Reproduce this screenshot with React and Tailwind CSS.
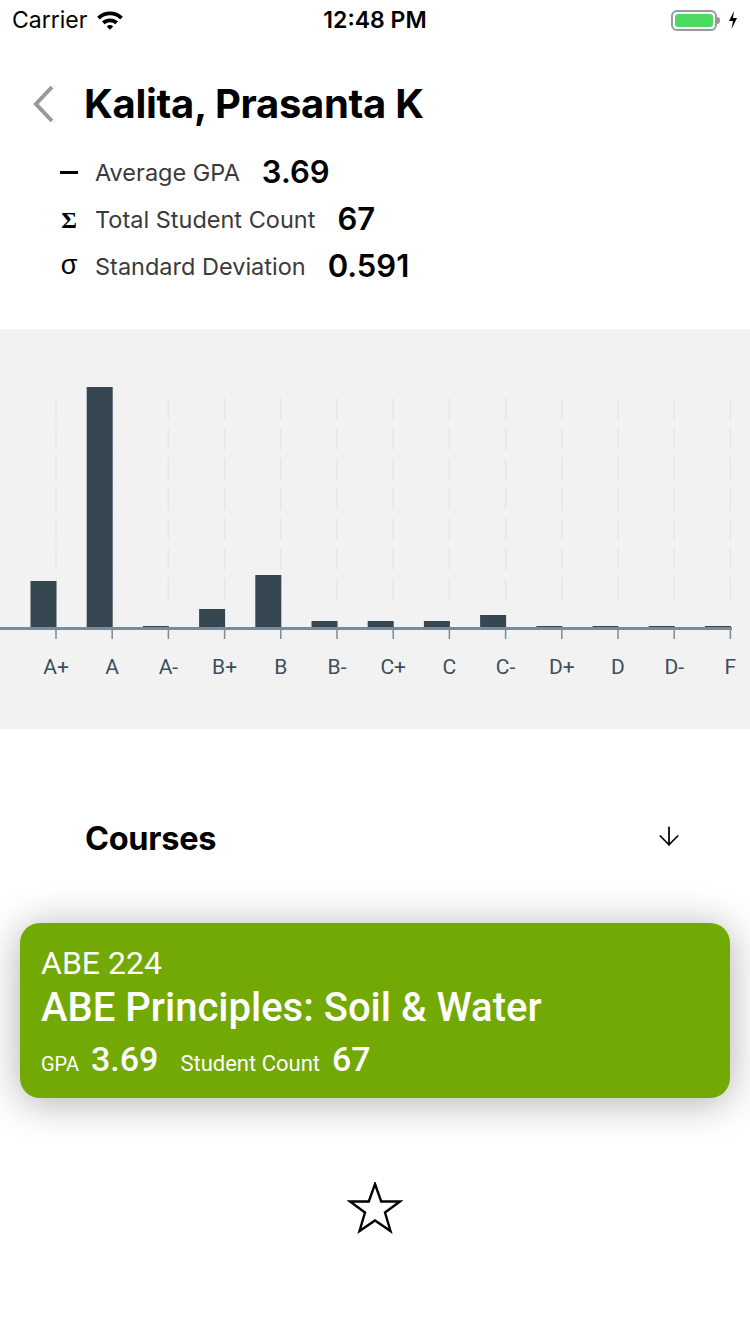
import { ArrowDown } from "lucide-react"

const grades = [
  { g: "A+", h: 48 },
  { g: "A", h: 242 },
  { g: "A-", h: 3 },
  { g: "B+", h: 20 },
  { g: "B", h: 54 },
  { g: "B-", h: 8 },
  { g: "C+", h: 8 },
  { g: "C", h: 8 },
  { g: "C-", h: 14 },
  { g: "D+", h: 3 },
  { g: "D", h: 3 },
  { g: "D-", h: 3 },
  { g: "F", h: 3 },
]

function StatusBar() {
  return (
    <div className="h-10 grid grid-cols-3 items-center px-3 font-['Inter',sans-serif] text-[23px] text-black">
      <div className="flex items-center gap-2">
        <span>Carrier</span>
        <svg width="30" height="22" viewBox="0 0 28 20">
          <path d="M2 7 A17 17 0 0 1 26 7 L23.5 9.5 A13.5 13.5 0 0 0 4.5 9.5 Z" fill="black" />
          <path d="M6.5 11.5 A11 11 0 0 1 21.5 11.5 L19 14 A7.5 7.5 0 0 0 9 14 Z" fill="black" />
          <path d="M11 16 A4.5 4.5 0 0 1 17 16 L14 19 Z" fill="black" />
        </svg>
      </div>
      <div className="text-center font-semibold">12:48 PM</div>
      <div className="flex items-center justify-end gap-1">
        <div className="w-[46px] h-[21px] rounded-[6px] border-2 border-[#9a9a9a] p-[2px] flex">
          <div className="flex-1 rounded-[3px] bg-[#4cd964]" />
        </div>
        <div className="w-[3px] h-[7px] rounded-r-sm bg-[#9a9a9a] -ml-1" />
        <svg width="10" height="18" viewBox="0 0 10 18" className="ml-1">
          <path d="M6 0 L1 10 H5 L3.5 18 L9 7 H5 Z" fill="black" />
        </svg>
      </div>
    </div>
  )
}

function Chart() {
  const step = 56.2
  const x0 = 56
  return (
    <svg width="750" height="400" viewBox="0 0 750 400" className="block">
      {grades.map((d, i) => (
        <line
          key={"g" + d.g}
          x1={x0 + i * step}
          x2={x0 + i * step}
          y1={69}
          y2={272}
          stroke="#e4e6e9"
          strokeWidth="1.5"
          strokeDasharray="22 8"
        />
      ))}
      {grades.map((d, i) => (
        <rect key={"b" + d.g} x={x0 + i * step - 25.5} y={300 - d.h} width={26} height={d.h} fill="#364752" />
      ))}
      <rect x="0" y="298" width="732" height="3" fill="#7a8c98" />
      {grades.map((d, i) => (
        <line
          key={"t" + d.g}
          x1={x0 + i * step}
          x2={x0 + i * step}
          y1={300}
          y2={310}
          stroke="#7a8c98"
          strokeWidth="1.5"
        />
      ))}
      {grades.map((d, i) => (
        <text
          key={"l" + d.g}
          x={x0 + i * step}
          y={345}
          textAnchor="middle"
          fontFamily="Roboto, sans-serif"
          fontSize="21"
          fill="#3d4f5a"
        >
          {d.g}
        </text>
      ))}
    </svg>
  )
}

function StatRow({ icon, label, value }) {
  return (
    <div className="flex items-center h-[47px]">
      <div className="w-[18px] flex justify-center">{icon}</div>
      <span className="ml-[17px] text-[23.5px] text-[#3a3a3a]">{label}</span>
      <span className="ml-[22px] text-[31px] font-semibold text-black">{value}</span>
    </div>
  )
}

export default function App() {
  return (
    <div className="w-[750px] min-h-[1334px] bg-white font-['Inter',sans-serif]">
      <StatusBar />

      <div className="flex items-center h-[50px] mt-[39px] pl-[33px]">
        <svg width="22" height="38" viewBox="0 0 22 38">
          <polyline points="19,2 3,19 19,36" fill="none" stroke="#999999" strokeWidth="4" />
        </svg>
        <h1 className="ml-[29px] text-[40px] font-bold text-black tracking-[-0.3px]">Kalita, Prasanta K</h1>
      </div>

      <div className="mt-[20px] pl-[60px]">
        <StatRow icon={<div className="w-[18px] h-[3px] bg-black" />} label="Average GPA" value="3.69" />
        <StatRow
          icon={<span className="text-[24px] font-bold font-['Liberation_Serif',serif] leading-none">Σ</span>}
          label="Total Student Count"
          value="67"
        />
        <StatRow
          icon={<span className="text-[27px] font-['Liberation_Sans',sans-serif] leading-none -mt-[2px]">σ</span>}
          label="Standard Deviation"
          value="0.591"
        />
      </div>

      <div className="mt-[39px] bg-[#f2f2f2] h-[400px]">
        <Chart />
      </div>

      <div className="flex items-center justify-between h-[60px] mt-[80px] pl-[85px] pr-[66px]">
        <h2 className="text-[32.5px] font-bold text-black tracking-[-0.3px]">Courses</h2>
        <ArrowDown className="w-[30px] h-[30px] text-black -mt-[6px]" strokeWidth={1.4} />
      </div>

      <div className="mx-[20px] mt-[54px] rounded-[20px] bg-[#72a905] h-[175px] px-[21px] pt-[20px] text-white shadow-[0_4px_40px_rgba(0,0,0,0.32)] font-['Roboto',sans-serif]">
        <div className="text-[32px] leading-[40px]">ABE 224</div>
        <div className="text-[40px] font-medium leading-[48px] mt-[1px]">ABE Principles: Soil &amp; Water</div>
        <div className="flex items-baseline mt-[2px]">
          <span className="text-[20px]">GPA</span>
          <span className="ml-[12px] text-[34px] font-medium">3.69</span>
          <span className="ml-[22px] text-[22px]">Student Count</span>
          <span className="ml-[12px] text-[34px] font-medium">67</span>
        </div>
      </div>

      <div className="flex justify-center mt-[84px]">
        <svg width="56" height="52" viewBox="0 0 56 52">
          <polygon
            points="28,2 34.2,19.5 53,19.5 38,30.5 43.5,49 28,38.5 12.5,49 18,30.5 3,19.5 21.8,19.5"
            fill="none"
            stroke="black"
            strokeWidth="2.4"
            strokeLinejoin="miter"
          />
        </svg>
      </div>
    </div>
  )
}
